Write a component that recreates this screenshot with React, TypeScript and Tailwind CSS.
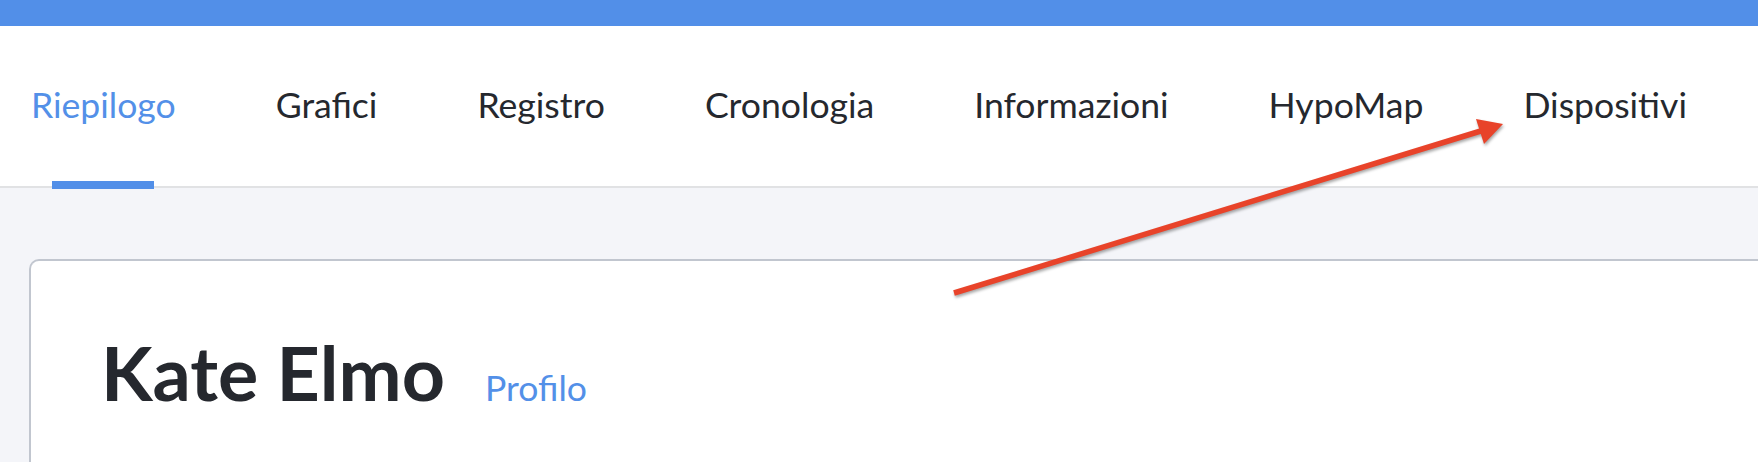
const tabs = ["Riepilogo", "Grafici", "Registro", "Cronologia", "Informazioni", "HypoMap", "Dispositivi"];

function Arrow() {
  return (
    <svg
      className="pointer-events-none absolute left-0 top-0 drop-shadow-[1px_2px_1.5px_rgba(0,0,0,0.35)]"
      width="1758"
      height="462"
      viewBox="0 0 1758 462"
    >
      <line x1="954" y1="293" x2="1484" y2="130" stroke="#e8432a" strokeWidth="5.5" />
      <polygon points="1503,124 1476,119 1484,144" fill="#e8432a" />
    </svg>
  );
}

export default function App() {
  return (
    <div className="relative h-[462px] w-[1758px] overflow-hidden bg-[#f4f5f9] font-['Lato','Noto_Sans',sans-serif] text-[#25282e]">
      <div className="h-[26px] bg-[#528fe8]" />

      <header className="h-[162px] border-b-2 border-[#e1e2e4] bg-white">
        <nav className="flex h-full items-stretch gap-[100px] pl-[31px] text-[35.6px]">
          {tabs.map((tab, i) => (
            <div key={tab} className="relative flex items-center pb-[2px]">
              <span className={i === 0 ? "text-[#5390e8]" : "text-[#25282e]"}>{tab}</span>
              {i === 0 ? (
                <span className="absolute bottom-[-3px] left-1/2 h-[8px] w-[102px] -translate-x-1/2 bg-[#528fe8]" />
              ) : null}
            </div>
          ))}
        </nav>
      </header>

      <main className="pt-[71px] pl-[29px]">
        <section className="h-[300px] rounded-tl-[10px] border-l-2 border-t-2 border-[#c1c6cf] bg-white pl-[70px] pt-[74px]">
          <div className="flex items-baseline gap-[40px]">
            <h1 className="text-[75.4px] font-bold leading-none">Kate Elmo</h1>
            <a className="text-[35.6px] leading-none text-[#5390e8]">Profilo</a>
          </div>
        </section>
      </main>

      <Arrow />
    </div>
  );
}
